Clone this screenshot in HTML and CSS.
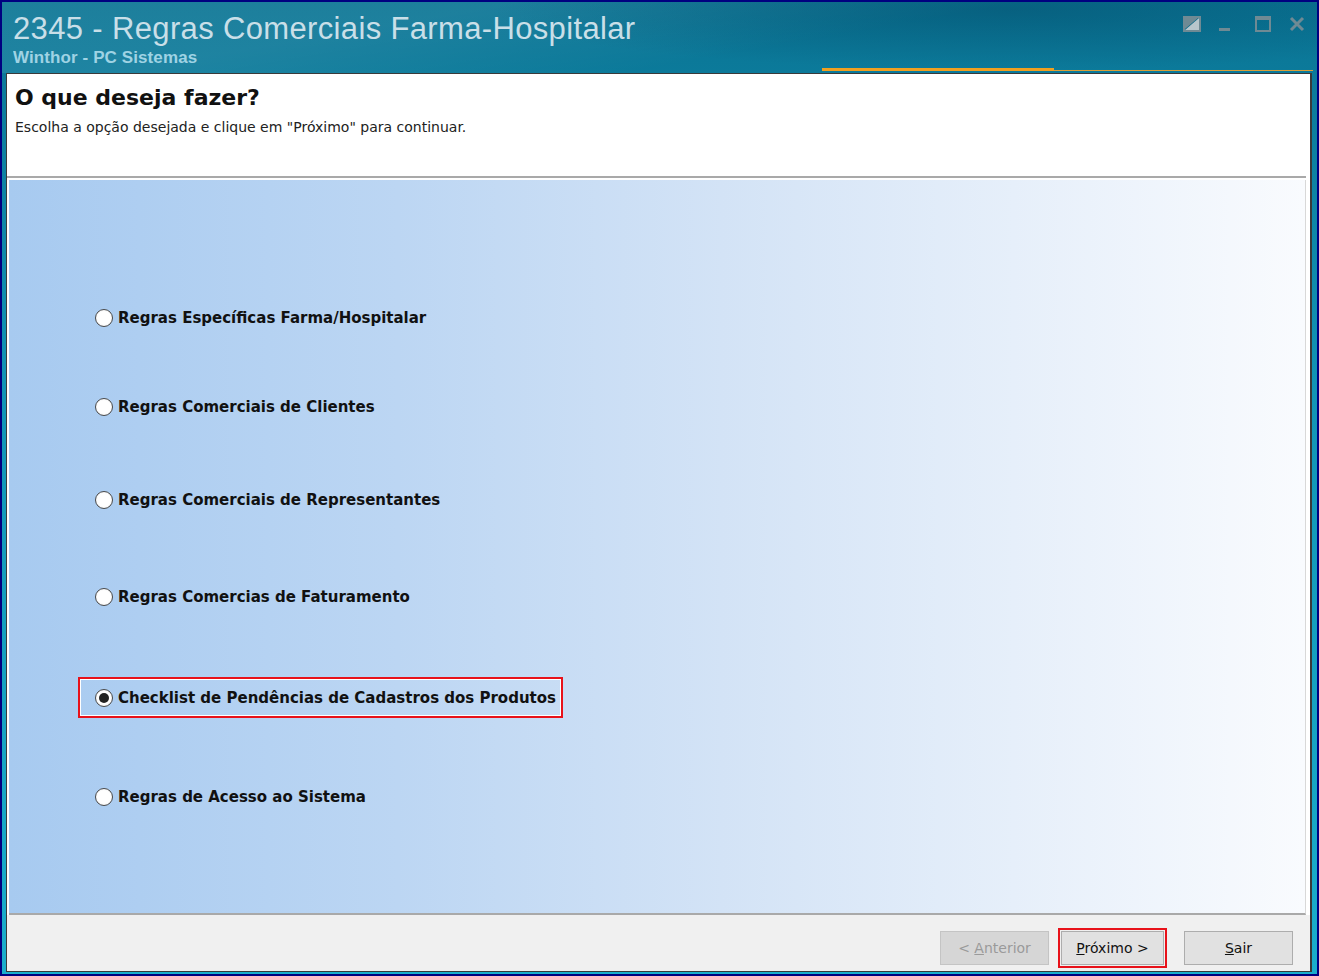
FILE: index.html
```html
<!DOCTYPE html>
<html lang="pt-BR">
<head>
    <meta charset="UTF-8">
    <title>2345 - Regras Comerciais Farma-Hospitalar</title>
    <link rel="stylesheet" href="styles.css">
</head>
<body>
    <div class="window">
        <div class="titlebar">
            <div class="title-text">
                <div class="title">2345 - Regras Comerciais Farma-Hospitalar</div>
                <div class="subtitle">Winthor - PC Sistemas</div>
            </div>
            <div class="controls">
                <svg width="18" height="16" viewBox="0 0 18 16"><rect x="1" y="1" width="16" height="14" fill="none" stroke="#6f8a94" stroke-width="2"/><polygon points="2,14 16,2 16,14" fill="#b8c6cc"/><polygon points="2,2 15,2 2,13" fill="#6f8a94"/></svg>
                <svg class="min" width="11" height="16" viewBox="0 0 11 16"><rect x="0" y="12" width="11" height="3" fill="#6f8a94"/></svg>
                <svg width="16" height="16" viewBox="0 0 16 16"><rect x="1" y="1" width="14" height="14" fill="none" stroke="#6f8a94" stroke-width="2"/><rect x="1" y="1" width="14" height="3" fill="#6f8a94"/></svg>
                <svg width="16" height="16" viewBox="0 0 16 16"><path d="M2 2 L14 14 M14 2 L2 14" stroke="#6f8a94" stroke-width="3"/></svg>
            </div>
            <div class="accent"></div>
        </div>

        <div class="frame">
            <div class="header">
                <h1>O que deseja fazer?</h1>
                <p>Escolha a opção desejada e clique em "Próximo" para continuar.</p>
            </div>

            <div class="panel">
                <div class="options">
                    <label class="option"><span class="radio"></span>Regras Específicas Farma/Hospitalar</label>
                    <label class="option"><span class="radio"></span>Regras Comerciais de Clientes</label>
                    <label class="option"><span class="radio"></span>Regras Comerciais de Representantes</label>
                    <label class="option"><span class="radio"></span>Regras Comercias de Faturamento</label>
                    <label class="option checked"><span class="radio"></span>Checklist de Pendências de Cadastros dos Produtos</label>
                    <label class="option"><span class="radio"></span>Regras de Acesso ao Sistema</label>
                </div>
            </div>

            <div class="footer">
                <button class="btn" disabled>&lt; <u>A</u>nterior</button>
                <button class="btn marked"><u>P</u>róximo &gt;</button>
                <button class="btn"><u>S</u>air</button>
            </div>
        </div>
    </div>
</body>
</html>
```

FILE: styles.css
```css
body {
    margin: 0;
    font-family: "DejaVu Sans", Verdana, sans-serif;
}
.window {
    width: 1319px;
    height: 976px;
    box-sizing: border-box;
    border: 2px solid #000080;
    padding: 0 5px 0 4px;
    display: flex;
    flex-direction: column;
    background: linear-gradient(180deg, #0a7494 0%, #1295b6 40%, #1aaecc 100%);
}
.titlebar {
    height: 71px;
    position: relative;
    display: flex;
    justify-content: space-between;
    background:
        radial-gradient(ellipse 520px 60px at 1010px 8px, rgba(0, 60, 90, 0.35), transparent),
        linear-gradient(170deg, rgba(255, 255, 255, 0.08) 30%, transparent 60%);
    margin: 0 -5px 0 -4px;
    padding: 0 5px 0 4px;
}
.title-text {
    padding: 9px 0 0 7px;
}
.title {
    font-family: "Liberation Sans", Arial, sans-serif;
    font-size: 31px;
    color: #c9dfe8;
    line-height: 36px;
    letter-spacing: 0.35px;
}
.subtitle {
    font-family: "Liberation Sans", Arial, sans-serif;
    font-weight: bold;
    font-size: 17px;
    color: #9fd3e4;
    line-height: 18px;
    margin-top: 3px;
    letter-spacing: 0.1px;
    transform: scaleY(0.95);
    transform-origin: left top;
}
.controls {
    display: flex;
    align-items: flex-start;
    gap: 18px;
    padding: 14px 7px 0 0;
}
.controls .min {
    margin: 0 7px 0 0;
}
.accent {
    position: absolute;
    left: 820px;
    right: 4px;
    bottom: 2px;
    height: 1px;
    background: #d9a13a;
}
.accent::before {
    content: "";
    position: absolute;
    left: 0;
    width: 232px;
    bottom: 0;
    height: 3px;
    background: #f0a020;
}
.frame {
    flex: 1;
    border: 1px solid #3a3a3a;
    border-right: 2px solid #3a3a3a;
    background: #fff;
    display: flex;
    flex-direction: column;
    margin-bottom: 2px;
}
.header {
    height: 104px;
    padding: 9px 8px 0 8px;
    box-sizing: border-box;
    border-bottom: 2px solid #a9a9a9;
    margin-right: 4px;
}
.header h1 {
    margin: 0;
    font-size: 22px;
    font-weight: bold;
    color: #111;
    line-height: 29px;
}
.header p {
    margin: 7px 0 0 0;
    font-size: 14px;
    color: #222;
}
.panel {
    flex: 1;
    margin: 2px 4px 0 2px;
    border-bottom: 2px solid #a9a9a9;
    border-right: 1px solid #d8d8d8;
    background: linear-gradient(90deg, #a7caf0 0%, #bcd6f3 30%, #d3e3f6 55%, #f9fbfe 100%);
}
.options {
    display: grid;
    grid-template-rows: 89px 93px 97px 101px 99px;
    padding: 127px 0 0 71px;
    align-items: start;
}
.option {
    display: inline-flex;
    align-items: center;
    width: max-content;
    padding: 0 8px 0 15px;
    height: 21px;
    font-size: 15px;
    font-weight: bold;
    color: #111;
}
.option.checked {
    height: 37px;
    margin: -10px 0 0 -2px;
    padding-right: 5px;
    border: 2px solid #e8121a;
    outline: 1px solid #fff;
    outline-offset: -3px;
}
.radio {
    width: 18px;
    height: 18px;
    box-sizing: border-box;
    border: 1px solid #4a4a4a;
    border-radius: 50%;
    background: radial-gradient(circle, #fff 55%, #e4e4e4);
    margin-right: 5px;
    position: relative;
}
.checked .radio::after {
    content: "";
    position: absolute;
    left: 3px;
    top: 3px;
    width: 10px;
    height: 10px;
    border-radius: 50%;
    background: #222;
}
.footer {
    height: 56px;
    background: #f0f0f0;
    display: flex;
    justify-content: flex-end;
    align-items: flex-start;
    gap: 12px;
    padding: 16px 17px 0 0;
    box-sizing: border-box;
}
.btn {
    width: 109px;
    height: 34px;
    font-family: "DejaVu Sans", Verdana, sans-serif;
    font-size: 14px;
    color: #111;
    background: #e1e1e1;
    border: 1px solid #adadad;
}
.btn:disabled {
    color: #9a9a9a;
    background: #d6d6d6;
    border-color: #c4c4c4;
}
.btn.marked {
    width: 103px;
    outline: 2px solid #e8121a;
    outline-offset: 1px;
    margin-right: 8px;
}
```
